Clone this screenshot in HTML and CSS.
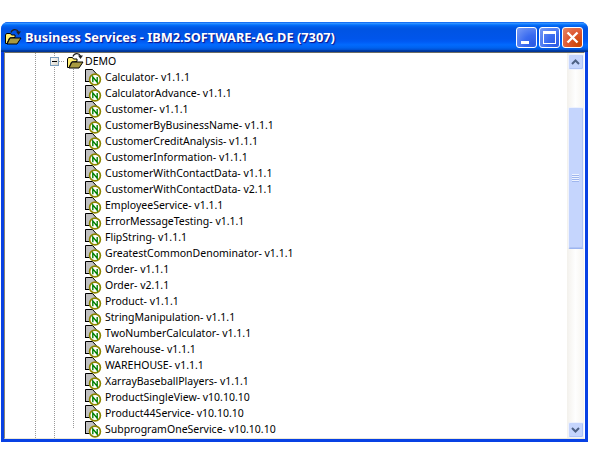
FILE: index.html
```html
<!DOCTYPE html>
<html lang="en">
<head>
  <meta charset="UTF-8">
  <title>Business Services</title>
  <link rel="stylesheet" href="styles.css">
</head>
<body>
  <svg class="defs" width="0" height="0">
    <symbol id="service" viewBox="0 0 18 18">
      <path d="M1.5 1.5H8.5L13.5 7V13.5H1.5Z" fill="#c0c0c0"/>
      <path d="M1.5 14V1.5H8.5L13.5 7" fill="none" stroke="#000"/>
      <path d="M1 13.5H6" stroke="#000"/>
      <circle cx="11" cy="11.5" r="5.4" fill="#fff" stroke="#8c8400" stroke-width="1.7"/>
      <path d="M8.8 14.3V8.9L13.2 14.3V8.9" fill="none" stroke="#008000" stroke-width="1.4"/>
    </symbol>
    <symbol id="folder" viewBox="0 0 18 18">
      <path d="M1.5 15.5V7L2.5 5.5H6.5L7.5 7H11V9.5L5.5 10L3 15.5Z" fill="#ffee70" stroke="#000" stroke-linejoin="round"/>
      <path d="M3 16L6 10H17L13 16Z" fill="#a89a40" stroke="#000" stroke-linejoin="round"/>
      <path d="M7 4.5C8 1 13 0.5 14.5 4" fill="none" stroke="#222" stroke-width="1.2"/>
      <path d="M12 3.5H17L14.5 7Z" fill="#222"/>
    </symbol>
  </svg>

  <div class="window">
    <div class="titlebar">
      <svg class="title-icon" width="18" height="18"><use href="#folder"/></svg>
      <span class="title-text">Business Services - IBM2.SOFTWARE-AG.DE (7307)</span>
      <div class="controls">
        <div class="ctl ctl-blue"><span class="min-mark"></span></div>
        <div class="ctl ctl-blue"><span class="max-mark"></span></div>
        <div class="ctl ctl-red">
          <svg width="13" height="13" viewBox="0 0 13 13"><path d="M1.5 1.5L11.5 11.5M11.5 1.5L1.5 11.5" stroke="#fff" stroke-width="2.4"/></svg>
        </div>
      </div>
    </div>

    <div class="client">
      <div class="tree">
        <div class="row row-root">
          <span class="expander"><span class="minus"></span></span>
          <svg class="folder" width="18" height="18"><use href="#folder"/></svg>
          <span class="label">DEMO</span>
        </div>
        <div class="leaves">
          <div class="row"><svg class="node" width="18" height="18"><use href="#service"/></svg><span class="label">Calculator- v1.1.1</span></div>
          <div class="row"><svg class="node" width="18" height="18"><use href="#service"/></svg><span class="label">CalculatorAdvance- v1.1.1</span></div>
          <div class="row"><svg class="node" width="18" height="18"><use href="#service"/></svg><span class="label">Customer- v1.1.1</span></div>
          <div class="row"><svg class="node" width="18" height="18"><use href="#service"/></svg><span class="label">CustomerByBusinessName- v1.1.1</span></div>
          <div class="row"><svg class="node" width="18" height="18"><use href="#service"/></svg><span class="label">CustomerCreditAnalysis- v1.1.1</span></div>
          <div class="row"><svg class="node" width="18" height="18"><use href="#service"/></svg><span class="label">CustomerInformation- v1.1.1</span></div>
          <div class="row"><svg class="node" width="18" height="18"><use href="#service"/></svg><span class="label">CustomerWithContactData- v1.1.1</span></div>
          <div class="row"><svg class="node" width="18" height="18"><use href="#service"/></svg><span class="label">CustomerWithContactData- v2.1.1</span></div>
          <div class="row"><svg class="node" width="18" height="18"><use href="#service"/></svg><span class="label">EmployeeService- v1.1.1</span></div>
          <div class="row"><svg class="node" width="18" height="18"><use href="#service"/></svg><span class="label">ErrorMessageTesting- v1.1.1</span></div>
          <div class="row"><svg class="node" width="18" height="18"><use href="#service"/></svg><span class="label">FlipString- v1.1.1</span></div>
          <div class="row"><svg class="node" width="18" height="18"><use href="#service"/></svg><span class="label">GreatestCommonDenominator- v1.1.1</span></div>
          <div class="row"><svg class="node" width="18" height="18"><use href="#service"/></svg><span class="label">Order- v1.1.1</span></div>
          <div class="row"><svg class="node" width="18" height="18"><use href="#service"/></svg><span class="label">Order- v2.1.1</span></div>
          <div class="row"><svg class="node" width="18" height="18"><use href="#service"/></svg><span class="label">Product- v1.1.1</span></div>
          <div class="row"><svg class="node" width="18" height="18"><use href="#service"/></svg><span class="label">StringManipulation- v1.1.1</span></div>
          <div class="row"><svg class="node" width="18" height="18"><use href="#service"/></svg><span class="label">TwoNumberCalculator- v1.1.1</span></div>
          <div class="row"><svg class="node" width="18" height="18"><use href="#service"/></svg><span class="label">Warehouse- v1.1.1</span></div>
          <div class="row"><svg class="node" width="18" height="18"><use href="#service"/></svg><span class="label">WAREHOUSE- v1.1.1</span></div>
          <div class="row"><svg class="node" width="18" height="18"><use href="#service"/></svg><span class="label">XarrayBaseballPlayers- v1.1.1</span></div>
          <div class="row"><svg class="node" width="18" height="18"><use href="#service"/></svg><span class="label">ProductSingleView- v10.10.10</span></div>
          <div class="row"><svg class="node" width="18" height="18"><use href="#service"/></svg><span class="label">Product44Service- v10.10.10</span></div>
          <div class="row"><svg class="node" width="18" height="18"><use href="#service"/></svg><span class="label">SubprogramOneService- v10.10.10</span></div>
        </div>
      </div>

      <div class="scrollbar">
        <div class="sb-btn">
          <svg width="9" height="6" viewBox="0 0 9 6"><path d="M1 5L4.5 1.5L8 5" fill="none" stroke="#4d6185" stroke-width="2"/></svg>
        </div>
        <div class="sb-gap-top"></div>
        <div class="sb-thumb"><span class="grip"></span></div>
        <div class="sb-gap-bottom"></div>
        <div class="sb-btn">
          <svg width="9" height="6" viewBox="0 0 9 6"><path d="M1 1L4.5 4.5L8 1" fill="none" stroke="#4d6185" stroke-width="2"/></svg>
        </div>
      </div>
    </div>
  </div>
</body>
</html>
```

FILE: styles.css
```css
html, body {
  margin: 0;
  height: 100%;
  background-color: #fff;
  overflow: hidden;
}
body {
  padding: 22px 0 0 1px;
  box-sizing: border-box;
}
.defs {
  display: block;
  height: 0;
}
.window {
  width: 587px;
  height: 420px;
  box-sizing: border-box;
  display: flex;
  flex-direction: column;
  padding: 0 3px 3px;
  background-color: #0841e4;
  border-radius: 7px 7px 0 0;
  overflow: hidden;
}
.titlebar {
  flex: none;
  height: 30px;
  margin: 0 -3px;
  padding: 0 5px 0 3px;
  display: flex;
  align-items: center;
  background: linear-gradient(#0058ee 0, #3593ff 4%, #288eff 6%, #127dff 8%, #036ffc 10%, #0262ee 14%, #0057e5 20%, #0054e3 24%, #0055eb 56%, #005bf5 66%, #026afe 76%, #0062ef 86%, #0052d6 92%, #0040ab 94%, #003092 100%);
}
.title-icon {
  flex: none;
  margin-right: 3px;
}
.title-text {
  flex: 1;
  color: #fff;
  font: bold 12.8px "Noto Sans", sans-serif;
  text-shadow: 1px 1px 1px #0f1089;
  white-space: nowrap;
}
.controls {
  display: flex;
  gap: 2px;
}
.ctl {
  width: 21px;
  height: 21px;
  box-sizing: border-box;
  border: 1px solid #fff;
  border-radius: 3px;
  display: flex;
  align-items: center;
  justify-content: center;
  position: relative;
}
.ctl-blue {
  background: radial-gradient(circle at 85% 85%, #2d5be3 0, #3a6bf0 40%, #7a9df5 100%);
}
.ctl-red {
  background: radial-gradient(circle at 85% 85%, #cc4600 0, #dd5530 50%, #e88868 100%);
}
.min-mark {
  position: absolute;
  left: 4px;
  bottom: 3px;
  width: 8px;
  height: 3px;
  background-color: #fff;
}
.max-mark {
  width: 13px;
  height: 13px;
  box-sizing: border-box;
  border: 1px solid #fff;
  border-top-width: 3px;
}
.client {
  flex: 1;
  min-height: 0;
  display: flex;
  background-color: #fff;
  border-top: 1px solid #716f64;
  border-left: 1px solid #8a8778;
  border-bottom: 1px solid #ece9d8;
  border-right: 1px solid #fff;
}
.tree {
  flex: 1;
  min-width: 0;
  overflow: hidden;
  padding-left: 31px;
  background-image:
    repeating-linear-gradient(#999 0 1px, transparent 1px 2px),
    repeating-linear-gradient(#999 0 1px, transparent 1px 2px);
  background-size: 1px 100%, 1px 100%;
  background-position: 30px 0, 49px 0;
  background-repeat: no-repeat;
}
.row {
  height: 16px;
  display: flex;
  align-items: center;
  font: 10.5px "Noto Sans", sans-serif;
  color: #000;
  white-space: nowrap;
}
.row-root {
  padding-left: 14px;
  background-image: repeating-linear-gradient(90deg, #999 0 1px, transparent 1px 2px);
  background-size: 6px 1px;
  background-position: 23px 8px;
  background-repeat: no-repeat;
}
.expander {
  flex: none;
  width: 9px;
  height: 9px;
  box-sizing: border-box;
  border: 1px solid #7b9ebd;
  background: linear-gradient(135deg, #fff, #d8d4c8);
  display: flex;
  align-items: center;
  justify-content: center;
  margin-right: 7px;
}
.minus {
  width: 5px;
  height: 1px;
  background-color: #000;
}
.folder {
  flex: none;
  margin-right: 1px;
}
.leaves {
  margin-left: 37px;
  padding-left: 11px;
  background-image:
    repeating-linear-gradient(#999 0 1px, transparent 1px 2px);
  background-size: 1px calc(100% - 8px);
  background-position: 0 0;
  background-repeat: no-repeat;
}
.leaves .row {
  position: relative;
  background-image: repeating-linear-gradient(90deg, #999 0 1px, transparent 1px 2px);
  background-size: 11px 1px;
  background-position: -11px 8px;
  background-repeat: no-repeat;
}
.node {
  flex: none;
  margin-right: 3px;
}
.scrollbar {
  flex: none;
  width: 17px;
  display: flex;
  flex-direction: column;
  align-items: stretch;
  background: linear-gradient(90deg, #f3f1ec, #fefefe 50%, #f6f4ef);
  box-sizing: border-box;
  padding: 1px 0 0;
}
.sb-btn, .sb-thumb {
  box-sizing: border-box;
  margin: 0 0.5px;
  border: 1px solid #eef2fd;
  border-radius: 2px;
  background-color: #c5d5fd;
  box-shadow: inset -1px -1px 0 #b0c4f5;
}
.sb-btn {
  flex: none;
  height: 16px;
  display: flex;
  align-items: center;
  justify-content: center;
}
.sb-gap-top {
  flex: none;
  height: 37px;
}
.sb-gap-bottom {
  flex: 1;
}
.sb-thumb {
  flex: none;
  height: 142px;
  display: flex;
  align-items: center;
  justify-content: center;
  border-bottom-color: #9db5f0;
}
.grip {
  width: 7px;
  height: 8px;
  background: repeating-linear-gradient(#eef3fe 0 1px, #9fb6ee 1px 2px);
}
```
